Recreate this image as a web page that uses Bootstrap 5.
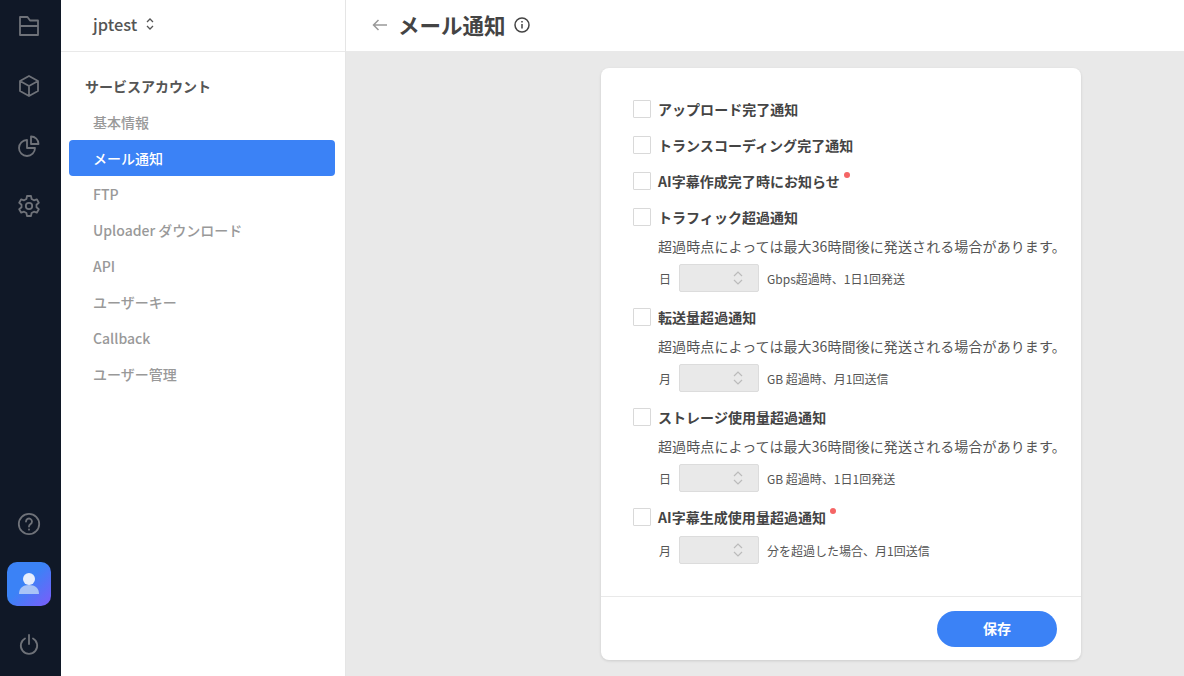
<!DOCTYPE html>
<html lang="ja">
  <head>
    <meta charset="UTF-8" />
    <title>メール通知</title>
    <link href="https://cdn.jsdelivr.net/npm/bootstrap@5.3.0/dist/css/bootstrap.min.css" rel="stylesheet" />
    <style>
      html, body { height: 100%; overflow: hidden; }
      body { font-family: "Noto Sans CJK JP", "Noto Sans", sans-serif; color: #444; background: #e9e9e9; }
      .rail { width: 61px; background: #101827; padding-right: 3px; }
      .rail-btn { width: 44px; height: 44px; color: #6f7279; }
      .rail-top { padding-top: 4px; gap: 16px; }
      .rail-bottom { padding-bottom: 10px; gap: 16px; }
      .rail-user { border-radius: 10px; background: linear-gradient(135deg, #3b82f6 45%, #7c5cfa 100%); }
      .side { width: 285px; background: #fff; border-right: 1px solid #e5e5e5; }
      .side-head { height: 52px; padding: 0 0 3px 32px; border-bottom: 1px solid #e9e9e9; font-size: 16.4px; font-weight: 500; color: #555; }
      .side-title { font-size: 14px; font-weight: 700; color: #555; padding: 23px 0 0 24px; height: 52px; line-height: 22px; }
      .side-link { display: block; height: 36px; line-height: 36px; margin: 0 10px 0 8px; padding-left: 24px; font-size: 14px; font-weight: 500; color: #999; text-decoration: none; border-radius: 4px; }
      .side-link.active { background: #3b82f6; color: #fff; }
      .top-bar { height: 51px; background: #fff; padding: 0 0 2px 26px; }
      .top-title { font-size: 21.5px; font-weight: 700; color: #444; margin: 0 8px 0 10px; line-height: 49px; }
      .page-body { padding: 17px 0 0 255px; }
      .notice-card { width: 480px; height: 592px; border: 0; border-radius: 8px; box-shadow: 0 1px 3px rgba(0,0,0,.12); }
      .notice-body { padding: 24px 20px 0 32px; height: 528px; }
      .check-row { height: 36px; padding-bottom: 1px; font-size: 14px; letter-spacing: .04px; font-weight: 700; color: #444; }
      .check-box { width: 18px; height: 18px; border: 1px solid #d9d9d9; background: #fff; border-radius: 1px; margin: -1px 7px 0 0; flex: none; appearance: none; }
      .new-dot { width: 6px; height: 6px; border-radius: 50%; background: #f56565; align-self: flex-start; margin: 8px 0 0 4px; }
      .note-text { margin: -1px 0 0 25px; font-size: 14px; letter-spacing: .1px; line-height: 22px; color: #555; white-space: nowrap; }
      .limit-row { margin: 7px 0 8px 26px; height: 28px; font-size: 12px; color: #555; }
      .limit-row.tight { margin-top: 0; }
      .limit-text { padding-top: 2px; }
      .limit-input { width: 80px; height: 28px; margin: 0 8px 0 8px; background: #e9e9e9; border: 1px solid #dcdcdc; border-radius: 2px; padding-left: 52px; }
      .notice-foot { height: 64px; border-top: 1px solid #e9e9e9; padding-right: 24px; }
      .save-btn { width: 120px; height: 36px; padding: 0; border-radius: 18px; background: #3b82f6; border: 0; color: #fff; font-size: 14px; font-weight: 700; }
    </style>
  </head>
  <body>
    <div class="d-flex h-100">
      <!-- rail -->
      <div class="rail d-flex flex-column justify-content-between align-items-center flex-shrink-0">
        <div class="rail-top d-flex flex-column">
          <div class="rail-btn d-flex align-items-center justify-content-center">
            <svg width="20" height="20" viewBox="0 0 20 20" fill="none" stroke="currentColor" stroke-width="1.8" stroke-linejoin="round"><path d="M1 1h7.500l2.500 3.500h8V19H1zM1 10h18"/></svg>
          </div>
          <div class="rail-btn d-flex align-items-center justify-content-center">
            <svg width="22" height="24" viewBox="0 0 22 24" fill="none" stroke="currentColor" stroke-width="1.8" stroke-linejoin="round"><path d="M11 2l9 5v10l-9 5-9-5V7zM2 7l9 5 9-5M11 12v10"/></svg>
          </div>
          <div class="rail-btn d-flex align-items-center justify-content-center">
            <svg width="22" height="22" viewBox="0 0 22 22" fill="none" stroke="currentColor" stroke-width="1.8" stroke-linejoin="round"><path d="M9 5a8 8 0 1 0 8 8H9zM13 1.500a7.500 7.500 0 0 1 7.500 7.500H13z"/></svg>
          </div>
          <div class="rail-btn d-flex align-items-center justify-content-center">
            <svg width="24" height="24" viewBox="0 0 24 24" fill="none" stroke="currentColor" stroke-width="1.8" stroke-linejoin="round"><circle cx="12" cy="12" r="3.2"/><path d="M10 2h4l.6 3 2.300 1.300 2.900-1 2 3.500-2.300 2v2.400l2.300 2-2 3.500-2.900-1-2.300 1.300-.6 3h-4l-.6-3-2.300-1.300-2.900 1-2-3.500 2.300-2v-2.400l-2.300-2 2-3.500 2.900 1L9.400 5z"/></svg>
          </div>
        </div>
        <div class="rail-bottom d-flex flex-column">
          <div class="rail-btn d-flex align-items-center justify-content-center">
            <svg width="24" height="24" viewBox="0 0 24 24" fill="none" stroke="currentColor" stroke-width="1.8" stroke-linecap="round"><circle cx="12" cy="12" r="10.200"/><path d="M9 9.500a3 3 0 1 1 4.500 2.600c-1 .6-1.500 1.200-1.500 2.400M12 17.500v.2"/></svg>
          </div>
          <div class="rail-btn rail-user d-flex align-items-center justify-content-center">
            <svg width="22" height="24" viewBox="0 0 22 24"><path d="M1 22c0-6 4-9 10-9s10 3 10 9z" fill="#a9c4f7"/><circle cx="11" cy="7" r="6" fill="#e6eefd"/></svg>
          </div>
          <div class="rail-btn d-flex align-items-center justify-content-center">
            <svg width="20" height="21" viewBox="0 0 20 21" fill="none" stroke="currentColor" stroke-width="1.8" stroke-linecap="round"><path d="M6 4.500a8.200 8.200 0 1 0 8 0M10 1v9"/></svg>
          </div>
        </div>
      </div>

      <!-- sidebar -->
      <div class="side flex-shrink-0">
        <div class="side-head d-flex align-items-center">
          jptest
          <svg class="ms-2" width="10" height="14" viewBox="0 0 10 14" fill="none" stroke="#555" stroke-width="1.300"><path d="M2 5l3-3 3 3M2 9l3 3 3-3"/></svg>
        </div>
        <div class="side-title">サービスアカウント</div>
        <a class="side-link" href="#">基本情報</a>
        <a class="side-link active" href="#">メール通知</a>
        <a class="side-link" href="#">FTP</a>
        <a class="side-link" href="#">Uploader ダウンロード</a>
        <a class="side-link" href="#">API</a>
        <a class="side-link" href="#">ユーザーキー</a>
        <a class="side-link" href="#">Callback</a>
        <a class="side-link" href="#">ユーザー管理</a>
      </div>

      <!-- main -->
      <div class="flex-grow-1">
        <div class="top-bar d-flex align-items-center">
          <svg width="16" height="12" viewBox="0 0 16 12" fill="none" stroke="#999" stroke-width="1.500"><path d="M15 6H1.500M6.500 1l-5 5 5 5"/></svg>
          <h1 class="top-title">メール通知</h1>
          <svg width="16" height="16" viewBox="0 0 16 16" fill="none" stroke="#444" stroke-width="1.500"><circle cx="8" cy="8" r="7"/><path d="M8 7v4.500M8 4v1.500"/></svg>
        </div>
        <div class="page-body">
          <div class="card notice-card">
            <div class="notice-body">
              <label class="check-row d-flex align-items-center"><input class="check-box" type="checkbox" />アップロード完了通知</label>
              <label class="check-row d-flex align-items-center"><input class="check-box" type="checkbox" />トランスコーディング完了通知</label>
              <label class="check-row d-flex align-items-center"><input class="check-box" type="checkbox" />AI字幕作成完了時にお知らせ<span class="new-dot"></span></label>

              <label class="check-row d-flex align-items-center"><input class="check-box" type="checkbox" />トラフィック超過通知</label>
              <div class="note-text">超過時点によっては最大36時間後に発送される場合があります。</div>
              <div class="limit-row d-flex align-items-center"><span class="limit-text">日</span>
                <div class="limit-input d-flex align-items-center"><svg width="12" height="16" viewBox="0 0 12 16" fill="none" stroke="#bbb" stroke-width="1.200"><path d="M2 6l4-4 4 4M2 10l4 4 4-4"/></svg></div>
                <span class="limit-text">Gbps超過時、1日1回発送</span>
              </div>

              <label class="check-row d-flex align-items-center"><input class="check-box" type="checkbox" />転送量超過通知</label>
              <div class="note-text">超過時点によっては最大36時間後に発送される場合があります。</div>
              <div class="limit-row d-flex align-items-center"><span class="limit-text">月</span>
                <div class="limit-input d-flex align-items-center"><svg width="12" height="16" viewBox="0 0 12 16" fill="none" stroke="#bbb" stroke-width="1.200"><path d="M2 6l4-4 4 4M2 10l4 4 4-4"/></svg></div>
                <span class="limit-text">GB 超過時、月1回送信</span>
              </div>

              <label class="check-row d-flex align-items-center"><input class="check-box" type="checkbox" />ストレージ使用量超過通知</label>
              <div class="note-text">超過時点によっては最大36時間後に発送される場合があります。</div>
              <div class="limit-row d-flex align-items-center"><span class="limit-text">日</span>
                <div class="limit-input d-flex align-items-center"><svg width="12" height="16" viewBox="0 0 12 16" fill="none" stroke="#bbb" stroke-width="1.200"><path d="M2 6l4-4 4 4M2 10l4 4 4-4"/></svg></div>
                <span class="limit-text">GB 超過時、1日1回発送</span>
              </div>

              <label class="check-row d-flex align-items-center"><input class="check-box" type="checkbox" />AI字幕生成使用量超過通知<span class="new-dot"></span></label>
              <div class="limit-row tight d-flex align-items-center"><span class="limit-text">月</span>
                <div class="limit-input d-flex align-items-center"><svg width="12" height="16" viewBox="0 0 12 16" fill="none" stroke="#bbb" stroke-width="1.200"><path d="M2 6l4-4 4 4M2 10l4 4 4-4"/></svg></div>
                <span class="limit-text">分を超過した場合、月1回送信</span>
              </div>
            </div>
            <div class="notice-foot d-flex align-items-center justify-content-end">
              <button class="btn save-btn" type="button">保存</button>
            </div>
          </div>
        </div>
      </div>
    </div>
    <script src="https://cdn.jsdelivr.net/npm/bootstrap@5.3.0/dist/js/bootstrap.bundle.min.js"></script>
  </body>
</html>
